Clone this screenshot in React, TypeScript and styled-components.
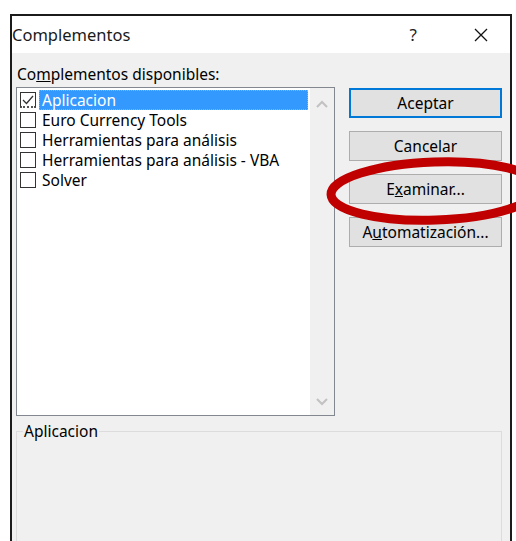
import React from 'react'
import styled, { createGlobalStyle } from 'styled-components'

const GlobalStyle = createGlobalStyle`
    html, body {
        margin: 0;
        padding: 0;
        background: #ffffff;
        overflow: hidden;
    }
    body {
        font-family: 'Noto Sans', 'Open Sans', sans-serif;
        color: #000;
    }
`

const addins = [
    { name: 'Aplicacion', checked: true },
    { name: 'Euro Currency Tools', checked: false },
    { name: 'Herramientas para análisis', checked: false },
    { name: 'Herramientas para análisis - VBA', checked: false },
    { name: 'Solver', checked: false },
]

const CheckMark = () => (
    <svg width="14" height="14" viewBox="0 0 14 14">
        <path d="M2 7 L5.5 10.5 L12 3" fill="none" stroke="#333" strokeWidth="1.3" />
    </svg>
)

const Chevron = ({ up }: { up?: boolean }) => (
    <svg width="12" height="8" viewBox="0 0 12 8">
        <path
            d={up ? 'M1 7 L6 2 L11 7' : 'M1 1 L6 6 L11 1'}
            fill="none"
            stroke="#c2c2c2"
            strokeWidth="2"
        />
    </svg>
)

const CloseIcon = () => (
    <svg width="14" height="14" viewBox="0 0 14 14">
        <path d="M1 1 L13 13 M13 1 L1 13" stroke="#111" strokeWidth="1.3" />
    </svg>
)

export default function App() {
    return (
        <Page>
            <GlobalStyle />
            <Dialog>
                <TitleBar>
                    <Title>Complementos</Title>
                    <TitleButtons>
                        <Help>?</Help>
                        <CloseIcon />
                    </TitleButtons>
                </TitleBar>
                <Body>
                    <Label>
                        Co<u>m</u>plementos disponibles:
                    </Label>
                    <Main>
                        <ListBox>
                            <Items>
                                {addins.map((a, i) => (
                                    <Item key={a.name}>
                                        <Box focused={i === 0}>{a.checked && <CheckMark />}</Box>
                                        <ItemText selected={i === 0}>{a.name}</ItemText>
                                    </Item>
                                ))}
                            </Items>
                            <ScrollBar>
                                <Chevron up />
                                <Chevron />
                            </ScrollBar>
                        </ListBox>
                        <Buttons>
                            <Button primary>Aceptar</Button>
                            <Button>Cancelar</Button>
                            <Button>
                                E<u>x</u>aminar...
                            </Button>
                            <Button>
                                A<u>u</u>tomatización...
                            </Button>
                        </Buttons>
                    </Main>
                    <Group>
                        <Legend>Aplicacion</Legend>
                    </Group>
                </Body>
            </Dialog>
            <Highlight width="230" height="90" viewBox="0 0 230 90">
                <ellipse
                    cx="112"
                    cy="43"
                    rx="104"
                    ry="29"
                    fill="none"
                    stroke="#c00000"
                    strokeWidth="9"
                    transform="rotate(-2 112 43)"
                />
            </Highlight>
        </Page>
    )
}

const Page = styled.div`
    position: relative;
    width: 516px;
    height: 541px;
    overflow: hidden;
    padding: 14px 0 0 10px;
    box-sizing: border-box;
`

const Dialog = styled.div`
    width: 502px;
    height: 560px;
    box-sizing: border-box;
    border: 2px solid #1b1b1b;
    display: flex;
    flex-direction: column;
    background: #f0f0f0;
`

const TitleBar = styled.div`
    height: 37px;
    background: #ffffff;
    display: flex;
    align-items: center;
    justify-content: space-between;
    padding: 0 22px 0 0;
`

const Title = styled.div`
    font-size: 16.5px;
    color: #1a1a1a;
`

const TitleButtons = styled.div`
    display: flex;
    align-items: center;
    gap: 57px;
`

const Help = styled.span`
    font-size: 17px;
    color: #222;
`

const Body = styled.div`
    flex: 1;
    padding: 11px 8px 0 4px;
    display: flex;
    flex-direction: column;
`

const Label = styled.div`
    font-size: 15.5px;
    line-height: 21px;
    margin: 0 0 2px 1px;

    u {
        text-decoration-thickness: 1px;
    }
`

const Main = styled.div`
    display: flex;
    gap: 14px;
`

const ListBox = styled.div`
    width: 320px;
    height: 329px;
    box-sizing: border-box;
    border: 1px solid #828790;
    background: #fff;
    display: flex;
`

const Items = styled.div`
    flex: 1;
    padding: 2px 2px 0 3px;
`

const Item = styled.div`
    display: flex;
    align-items: center;
    height: 20px;
`

const Box = styled.div<{ focused: boolean }>`
    width: 16px;
    height: 16px;
    box-sizing: border-box;
    border: 1px solid #333;
    border-bottom: ${p => (p.focused ? '2px dotted #555' : '1px solid #333')};
    margin-right: 3px;
    display: flex;
    align-items: center;
    justify-content: center;
`

const ItemText = styled.div<{ selected: boolean }>`
    flex: ${p => (p.selected ? 1 : 'none')};
    font-size: 15.5px;
    line-height: 18px;
    padding: 0 2px;
    color: ${p => (p.selected ? '#fff' : '#000')};
    background: ${p => (p.selected ? '#3399ff' : 'transparent')};
    border: 1px ${p => (p.selected ? 'dotted #f0a040' : 'solid transparent')};
`

const ScrollBar = styled.div`
    width: 24px;
    background: #f0f0f0;
    display: flex;
    flex-direction: column;
    align-items: center;
    justify-content: space-between;
    padding: 12px 0 9px;
`

const Buttons = styled.div`
    display: flex;
    flex-direction: column;
    gap: 13px;
    padding-top: 1px;
`

const Button = styled.div<{ primary?: boolean }>`
    width: 153px;
    height: 30px;
    box-sizing: border-box;
    display: flex;
    align-items: center;
    justify-content: center;
    background: #e1e1e1;
    border: ${p => (p.primary ? '2px solid #0078d7' : '1px solid #adadad')};
    font-size: 15.5px;
    color: #000;
`

const Group = styled.fieldset`
    margin: 7px 0 0 0;
    width: 486px;
    flex: 1;
    box-sizing: border-box;
    border: 1px solid #dcdcdc;
    padding: 0 6px;
    min-width: 0;
`

const Legend = styled.legend`
    font-size: 15.5px;
    line-height: 16px;
    padding: 0 1px;
    margin-left: 0;
`

const Highlight = styled.svg`
    position: absolute;
    left: 323px;
    top: 148px;
`
